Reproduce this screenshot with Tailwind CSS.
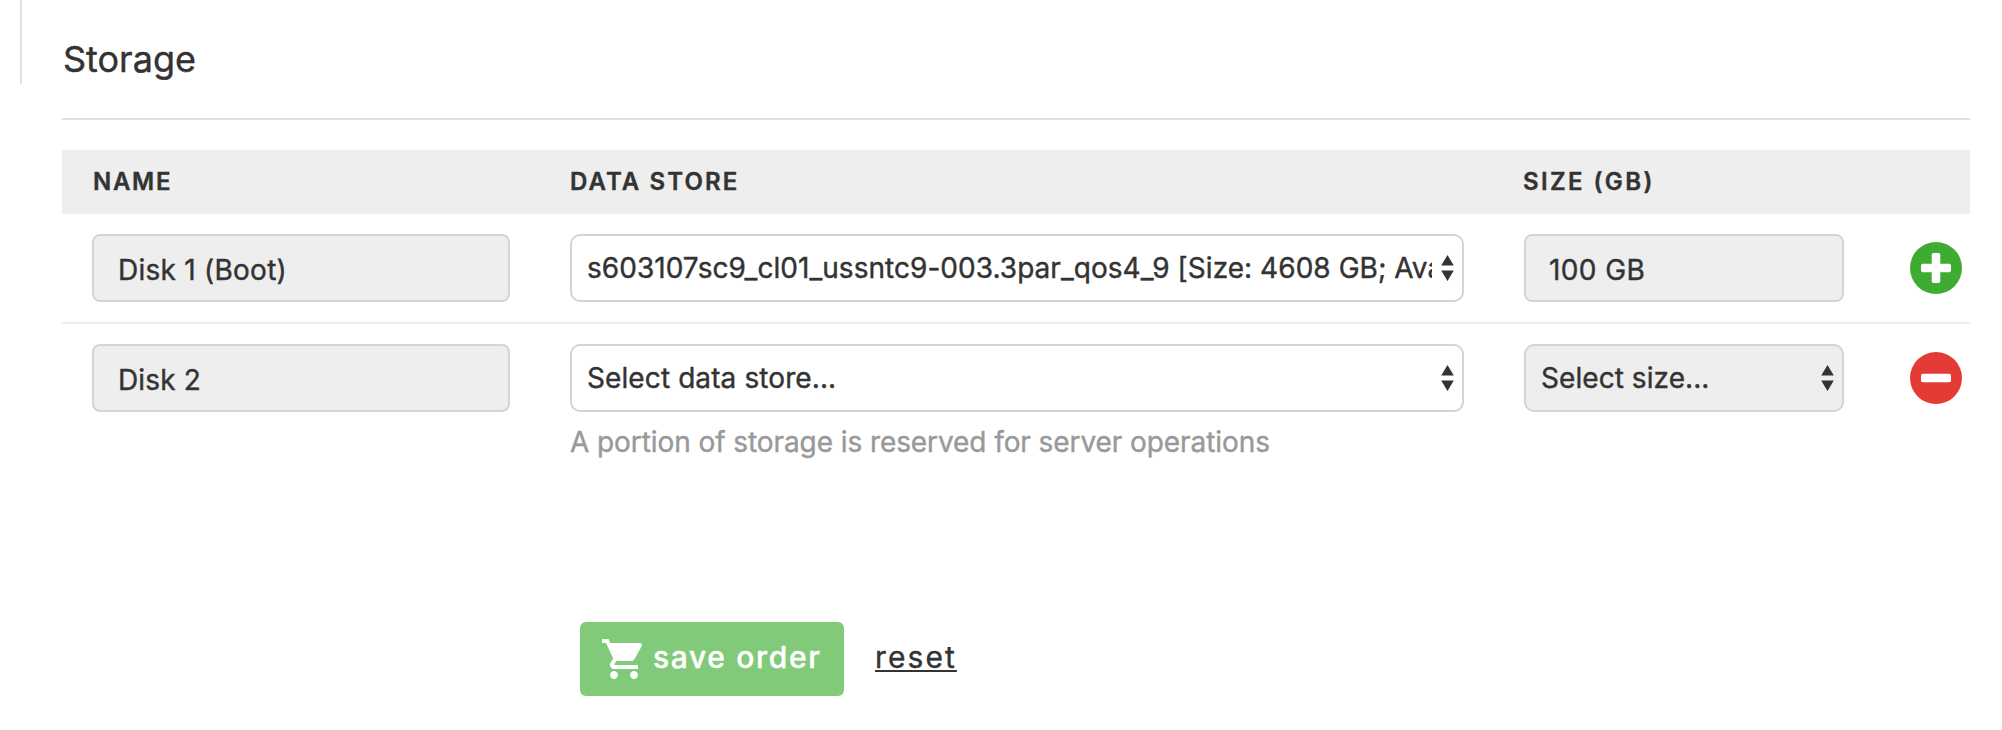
<!DOCTYPE html>
<html lang="en">
<head>
<meta charset="utf-8">
<title>Storage</title>
<script src="https://cdn.jsdelivr.net/npm/@tailwindcss/browser@4"></script>
</head>
<body class="flex h-[730px] overflow-hidden bg-white text-[28px] leading-[36px] text-[#333] [-webkit-text-stroke:0.4px]" style="font-family:Inter,'Liberation Sans',sans-serif">
<svg class="hidden">
  <symbol id="arrows" viewBox="0 0 13 26"><path fill="#333" d="M6.5 0 12.8 10.4H.2zM.2 15.6h12.6L6.5 26z"/></symbol>
</svg>
<div class="ml-5 h-[84px] w-0.5 shrink-0 bg-[#e0e0e0]"></div>
<main class="ml-10 w-[1908px]">
  <h2 class="flex h-[120px] items-center border-b-2 border-[#dfdfdf] pl-px text-[36px]">Storage</h2>

  <section class="mt-[30px]">
    <div class="grid h-16 grid-cols-[478px_954px_380px_96px] items-center bg-[#eee] text-2xl font-semibold uppercase">
      <div class="pl-[31px] tracking-[1.7px]">Name</div>
      <div class="pl-[30px] tracking-[2.1px]">Data Store</div>
      <div class="pl-[29px] tracking-[2.4px]">Size (GB)</div>
    </div>

    <div class="grid grid-cols-[478px_954px_380px_96px] border-b-2 border-[#eee] py-5">
      <div class="px-[30px]">
        <div class="flex h-[68px] items-center rounded-lg border-2 border-[#d4d4d4] bg-[#eee] px-6 pt-1 tracking-[0.25px]">Disk 1 (Boot)</div>
      </div>
      <div class="px-[30px]">
        <div class="flex h-[68px] items-center rounded-[10px] border-2 border-[#d4d4d4] pl-[15px] pr-2">
          <span class="w-[845px] overflow-hidden whitespace-nowrap tracking-[0.04px]">s603107sc9_cl01_ussntc9-003.3par_qos4_9 [Size: 4608 GB; Ava</span>
          <svg class="ml-auto h-[26px] w-[13px]"><use href="#arrows"/></svg>
        </div>
      </div>
      <div class="px-[30px]">
        <div class="flex h-[68px] items-center rounded-lg border-2 border-[#d4d4d4] bg-[#eee] pl-[23px] pt-1 tracking-[0.4px]">100 GB</div>
      </div>
      <div class="flex items-center pl-9">
        <svg class="size-[52px]" viewBox="0 0 52 52"><circle cx="26" cy="26" r="26" fill="#3dac31"/><path fill="#fff" d="M23.5 11h5a1.8 1.8 0 0 1 1.8 1.8v8.9h8.9a1.8 1.8 0 0 1 1.8 1.8v5a1.8 1.8 0 0 1-1.8 1.8h-8.9v8.9a1.8 1.8 0 0 1-1.8 1.8h-5a1.8 1.8 0 0 1-1.8-1.8v-8.9h-8.9a1.8 1.8 0 0 1-1.8-1.8v-5a1.8 1.8 0 0 1 1.8-1.8h8.9v-8.9a1.8 1.8 0 0 1 1.8-1.8z"/></svg>
      </div>
    </div>

    <div class="grid grid-cols-[478px_954px_380px_96px] pt-5">
      <div class="px-[30px]">
        <div class="flex h-[68px] items-center rounded-lg border-2 border-[#d4d4d4] bg-[#eee] px-6 pt-1 tracking-[0.15px]">Disk 2</div>
      </div>
      <div class="px-[30px]">
        <div class="flex h-[68px] items-center rounded-[10px] border-2 border-[#d4d4d4] pl-[15px] pr-2">
          <span class="tracking-[0.1px]">Select data store...</span>
          <svg class="ml-auto h-[26px] w-[13px]"><use href="#arrows"/></svg>
        </div>
        <p class="mt-3 whitespace-nowrap tracking-[-0.08px] text-[#999]">A portion of storage is reserved for server operations</p>
      </div>
      <div class="px-[30px]">
        <div class="flex h-[68px] items-center rounded-[10px] border-2 border-[#d4d4d4] bg-[#eee] pl-[15px] pr-2">
          <span class="tracking-[0.06px]">Select size...</span>
          <svg class="ml-auto h-[26px] w-[13px]"><use href="#arrows"/></svg>
        </div>
      </div>
      <div class="flex h-[68px] items-center pl-9">
        <svg class="size-[52px]" viewBox="0 0 52 52"><circle cx="26" cy="26" r="26" fill="#e53b36"/><rect x="11" y="21.7" width="30" height="8.6" rx="1.8" fill="#fff"/></svg>
      </div>
    </div>
  </section>

  <div class="ml-[518px] mt-[162px] flex h-[74px] items-center text-[30px]">
    <button class="flex h-full w-[264px] items-center rounded-md bg-[#81ca7a] pl-5 font-medium text-white">
      <svg class="size-12" viewBox="0 0 24 24" fill="currentColor"><path d="M7 18c-1.1 0-1.99.9-1.99 2S5.9 22 7 22s2-.9 2-2-.9-2-2-2zM1 2v2h2l3.6 7.59-1.35 2.45c-.16.28-.25.61-.25.96 0 1.1.9 2 2 2h12v-2H7.42c-.14 0-.25-.11-.25-.25l.03-.12.9-1.63h7.45c.75 0 1.41-.41 1.75-1.03l3.58-6.49c.08-.14.12-.31.12-.48 0-.55-.45-1-1-1H5.21l-.94-2H1zm16 16c-1.1 0-1.99.9-1.99 2s.89 2 1.99 2 2-.9 2-2-.9-2-2-2z"/></svg>
      <span class="ml-[5px] whitespace-nowrap pb-1 tracking-[1.66px]">save order</span>
    </button>
    <a class="ml-[31px] pb-1 tracking-[2.1px] underline decoration-2 underline-offset-2 [text-decoration-skip-ink:none]">reset</a>
  </div>
</main>
</body>
</html>
